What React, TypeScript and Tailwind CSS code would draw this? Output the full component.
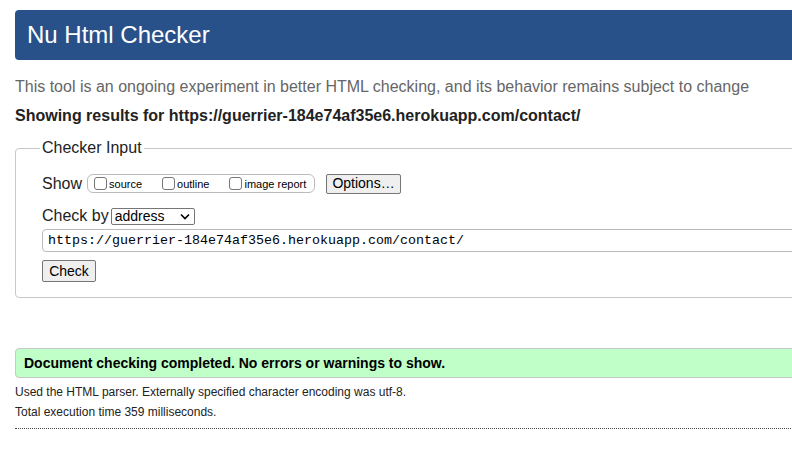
import React from "react";

function Box({ label }: { label: string }) {
  return (
    <span className="flex items-center">
      <span className="inline-block w-[13px] h-[13px] border border-[#767676] rounded-[3px] bg-white mr-[2px]" />
      <span className="text-[11px] leading-none text-black mt-[2px]">{label}</span>
    </span>
  );
}

export default function App() {
  return (
    <div className="w-[792px] h-[462px] overflow-hidden bg-white" style={{ fontFamily: '"Liberation Sans", Arial, sans-serif' }}>
      <div className="w-[1000px] px-[15px] pt-[10px]">
        <div className="h-[50px] bg-[#285189] rounded-[4px] flex items-center pl-[12px]">
          <h1 className="text-[24px] text-white leading-none">Nu Html Checker</h1>
        </div>
        <p className="mt-[17px] text-[16px] leading-[20px] text-[#666]">
          This tool is an ongoing experiment in better HTML checking, and its behavior remains subject to change
        </p>
        <p className="mt-[9px] text-[16px] leading-[20px] font-bold text-[#222]">
          Showing results for https://guerrier-184e74af35e6.herokuapp.com/contact/
        </p>
        <fieldset className="mt-[12px] border border-[#c8c8c8] rounded-[4px] pl-[26px] pb-[15px] h-[160px]">
          <legend className="ml-[-2px] px-[2px] text-[16px] leading-[20px] text-[#222]">Checker Input</legend>
          <div className="flex items-center h-[21px] mt-[15px]">
            <span className="text-[16px] text-[#222] mr-[5px]">Show</span>
            <span className="flex items-center h-[19px] w-[228px] border border-[#bbb] rounded-[6px] pl-[6px] gap-[20px]">
              <Box label="source" />
              <Box label="outline" />
              <Box label="image report" />
            </span>
            <span className="ml-[11px] h-[20px] w-[75px] flex items-center justify-center bg-[#efefef] border border-[#767676] rounded-[2px] text-[14px] text-black">
              Options…
            </span>
          </div>
          <div className="flex items-center h-[18px] mt-[13px]">
            <span className="text-[16px] text-[#222] mr-[2px]">Check by</span>
            <span className="h-[17px] w-[84px] flex items-center justify-between border border-[#767676] rounded-[2px] pl-[3px] pr-[4px] text-[14px] text-black">
              address
              <svg width="10" height="7" viewBox="0 0 10 7" fill="none">
                <path d="M1 1.5 L5 5.5 L9 1.5" stroke="#000" strokeWidth="1.6" />
              </svg>
            </span>
          </div>
          <div className="mt-[4px] h-[23px] flex items-center border border-[#bbb] rounded-[4px] pl-[5px]" style={{ fontFamily: '"Liberation Mono", monospace' }}>
            <span className="text-[13.33px] text-black">https://guerrier-184e74af35e6.herokuapp.com/contact/</span>
          </div>
          <div className="mt-[8px] h-[22px] w-[54px] flex items-center justify-center bg-[#efefef] border border-[#767676] rounded-[2px] text-[14px] text-black">
            Check
          </div>
        </fieldset>
        <div className="mt-[50px] h-[30px] bg-[#c0ffc8] border border-[#c8c8c8] rounded-[4px] flex items-center pl-[8px]">
          <span className="text-[14px] font-bold text-black">Document checking completed. No errors or warnings to show.</span>
        </div>
        <p className="mt-[7px] text-[12px] leading-[14px] text-[#222]">Used the HTML parser. Externally specified character encoding was utf-8.</p>
        <p className="mt-[6px] text-[12px] leading-[14px] text-[#222]">Total execution time 359 milliseconds.</p>
        <div className="mt-[9px] border-t border-dotted border-[#444]" />
      </div>
    </div>
  );
}
